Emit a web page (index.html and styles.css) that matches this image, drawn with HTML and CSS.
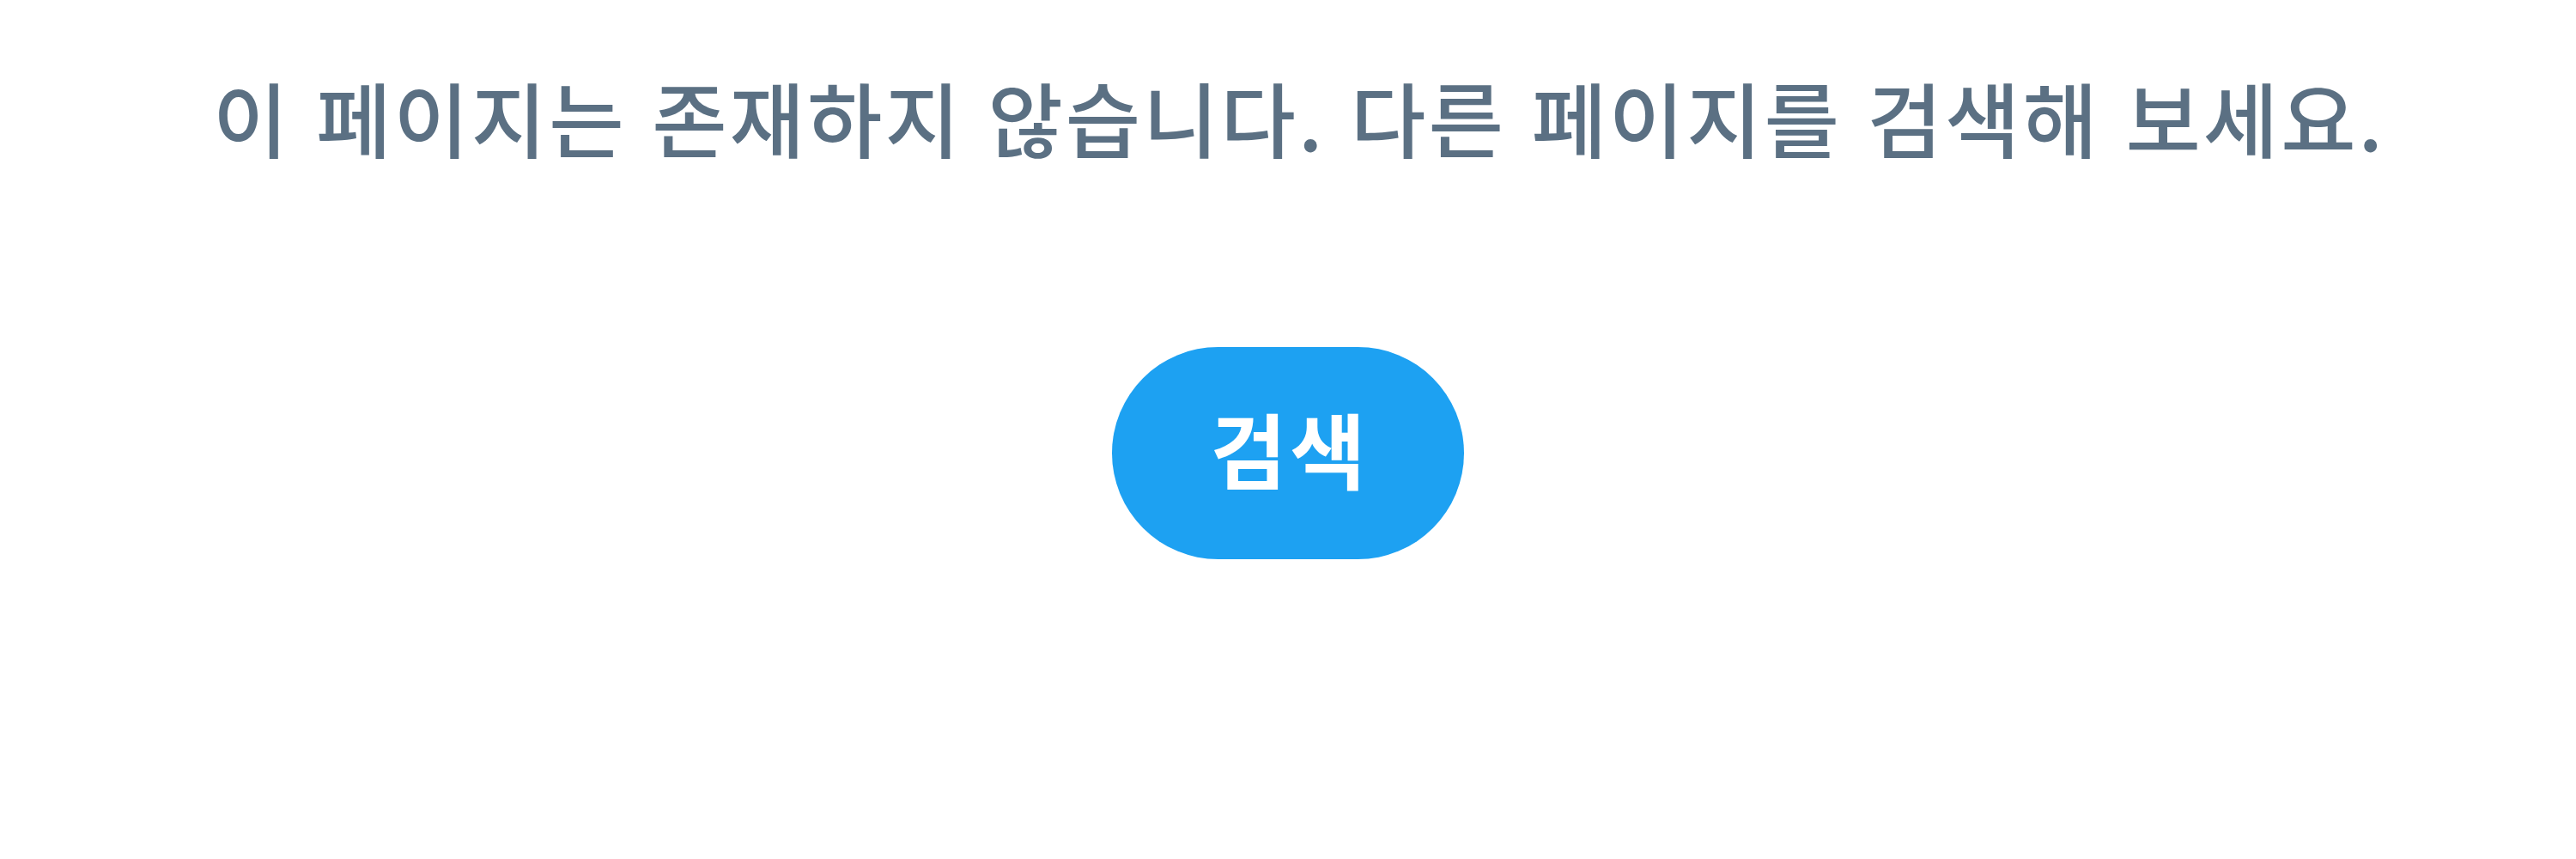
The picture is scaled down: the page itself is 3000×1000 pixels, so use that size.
FILE: index.html
```html
<!DOCTYPE html>
<html lang="ko">
<head>
<meta charset="utf-8">
<title>페이지 없음</title>
<link rel="stylesheet" href="styles.css">
</head>
<body>
<main class="page">
  <p class="message">이 페이지는 존재하지 않습니다. 다른 페이지를 검색해 보세요.</p>
  <button class="search-btn" type="button">검색</button>
</main>
</body>
</html>
```
FILE: styles.css
```css
html, body {
  margin: 0;
  padding: 0;
  background: #ffffff;
}
body {
  font-family: "Noto Sans CJK KR", "Noto Sans", sans-serif;
}
.page {
  display: flex;
  flex-direction: column;
  align-items: center;
  padding-top: 68px;
}
.message {
  margin: 0;
  padding-left: 26px;
  font-size: 95px;
  letter-spacing: 3px;
  line-height: 136px;
  color: #5b7083;
  font-weight: 500;
  text-align: center;
}
.search-btn {
  margin-top: 200px;
  width: 410px;
  height: 247px;
  border: none;
  border-radius: 124px;
  background: #1da1f2;
  color: #ffffff;
  font-family: "Noto Sans CJK KR", "Noto Sans", sans-serif;
  font-size: 96px;
  letter-spacing: 4px;
  font-weight: 700;
  padding: 0 0 14px 4px;
  display: flex;
  align-items: center;
  justify-content: center;
}
```
